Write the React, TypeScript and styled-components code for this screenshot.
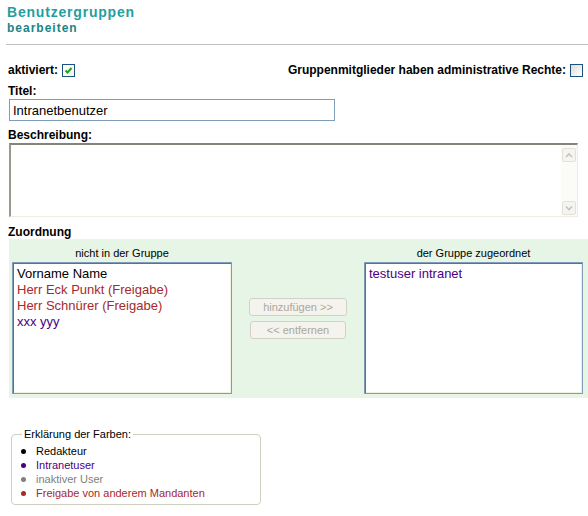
import React from 'react';
import styled, { createGlobalStyle } from 'styled-components';

const GlobalStyle = createGlobalStyle`
	html, body {
		margin: 0;
		padding: 0;
		background: #ffffff;
	}
	body {
		font-family: 'Liberation Sans', Arial, sans-serif;
		color: #000000;
		overflow: hidden;
	}
`;

const COLORS = {
	editor: '#000000',
	intranet: '#4b0082',
	inactive: '#808080',
	shared: '#a52a2a',
};

const Page = styled.div`
	width: 588px;
	padding-left: 8px;
	box-sizing: border-box;
`;

const Header = styled.div`
	padding-top: 4px;
	margin-left: -1px;
`;

const Title = styled.div`
	font: bold 14px/17px 'Liberation Sans', Arial, sans-serif;
	letter-spacing: 0.8px;
	color: #1f9f9f;
`;

const SubTitle = styled.div`
	font: bold 12px/15px 'Liberation Sans', Arial, sans-serif;
	letter-spacing: 1px;
	color: #1a8585;
`;

const Rule = styled.div`
	height: 1px;
	background: #c0c0c0;
	margin: 8px 0 0 -2px;
`;

const OptionRow = styled.div`
	display: flex;
	justify-content: space-between;
	align-items: center;
	height: 16px;
	margin-top: 17px;
	padding-right: 5px;
`;

const Option = styled.label`
	display: flex;
	align-items: center;
	gap: 4px;
	font: bold 12px/14px 'Liberation Sans', Arial, sans-serif;
`;

const Box = styled.span<{ $checked?: boolean }>`
	display: inline-flex;
	align-items: center;
	justify-content: center;
	width: 13px;
	height: 13px;
	box-sizing: border-box;
	border: 1px solid #1c5180;
	background: ${(p) =>
		p.$checked
			? 'linear-gradient(135deg, #ffffff 0%, #f4f4ef 100%)'
			: 'linear-gradient(135deg, #dcdcd7 0%, #ffffff 100%)'};
`;

const Label = styled.div<{ $top: number }>`
	font: bold 12px/14px 'Liberation Sans', Arial, sans-serif;
	margin-top: ${(p) => p.$top}px;
`;

const TextInput = styled.input`
	display: block;
	width: 326px;
	height: 22px;
	margin: 1px 0 0 1px;
	box-sizing: border-box;
	border: 1px solid #7f9db9;
	padding: 0 3px;
	font: 13px 'Liberation Sans', Arial, sans-serif;
	color: #000000;
	outline: none;
`;

const DescBox = styled.div`
	display: flex;
	width: 569px;
	height: 74px;
	margin: 1px 0 0 1px;
	box-sizing: border-box;
	border-top: 2px solid #85847a;
	border-left: 2px solid #9a998f;
	border-right: 1px solid #eeede5;
	border-bottom: 1px solid #eeede5;
	background: #ffffff;
`;

const DescText = styled.textarea`
	flex: 1;
	border: none;
	resize: none;
	outline: none;
	padding: 2px;
	font: 13px 'Liberation Sans', Arial, sans-serif;
`;

const ScrollBar = styled.div`
	width: 16px;
	display: flex;
	flex-direction: column;
	justify-content: space-between;
	align-items: center;
	padding: 3px 0 1px;
	background: #fbfbf7;
	box-sizing: border-box;
`;

const ScrollBtn = styled.div`
	width: 14px;
	height: 14px;
	box-sizing: border-box;
	border: 1px solid #e3e2da;
	border-radius: 2px;
	background: #f5f4ef;
	display: flex;
	align-items: center;
	justify-content: center;
`;

const Panel = styled.div`
	display: grid;
	grid-template-columns: 220px 132px 219px;
	margin-left: 1px;
	padding: 7px 5px 4px 3px;
	background: #e6f5e6;
`;

const Column = styled.div`
	display: flex;
	flex-direction: column;
`;

const Caption = styled.div`
	font: 11px/15px 'Liberation Sans', Arial, sans-serif;
	text-align: center;
	margin-bottom: 1px;
`;

const ListBox = styled.div`
	height: 132px;
	box-sizing: border-box;
	border: 1px solid #7f9db9;
	box-shadow: inset 1px 1px 0 #716f64, inset -1px -1px 0 #f1efe2;
	background: #ffffff;
	padding: 3px 4px;
`;

const ListItem = styled.div<{ $color: string }>`
	font: 13px/16px 'Liberation Sans', Arial, sans-serif;
	color: ${(p) => p.$color};
	white-space: nowrap;
`;

const Actions = styled.div`
	display: flex;
	flex-direction: column;
	align-items: center;
	gap: 5px;
	padding-top: 52px;
`;

const MoveButton = styled.button<{ $width: number }>`
	width: ${(p) => p.$width}px;
	height: 18px;
	padding: 0;
	border: 1px solid #d3d1c6;
	border-radius: 3px;
	background: #f4f3ee;
	color: #aca899;
	font: 11px/16px 'Liberation Sans', Arial, sans-serif;
`;

const Legend = styled.fieldset`
	width: 250px;
	box-sizing: border-box;
	margin: 30px 0 0 3px;
	padding: 4px 7px 4px 7px;
	border: 1px solid #d0d0bf;
	border-radius: 4px;
`;

const LegendTitle = styled.legend`
	font: 11px/12px 'Liberation Sans', Arial, sans-serif;
	margin-left: 3px;
	padding: 0 2px;
`;

const LegendRow = styled.div<{ $color: string }>`
	display: flex;
	align-items: center;
	gap: 10px;
	font: 11px/14px 'Liberation Sans', Arial, sans-serif;
	color: ${(p) => p.$color};
`;

const Dot = styled.span<{ $color: string }>`
	width: 5px;
	height: 5px;
	border-radius: 50%;
	margin-left: 2px;
	background: ${(p) => p.$color};
`;

function CheckBox({ checked }: { checked?: boolean }) {
	return (
		<Box $checked={checked}>
			{checked ? (
				<svg width="9" height="9" viewBox="0 0 9 9">
					<path d="M1.5 4.5 L3.5 6.5 L7.5 2" fill="none" stroke="#21a121" strokeWidth="2" />
				</svg>
			) : null}
		</Box>
	);
}

function Chevron({ up }: { up?: boolean }) {
	return (
		<svg width="8" height="6" viewBox="0 0 8 6">
			<path
				d={up ? 'M1 5 L4 2 L7 5' : 'M1 1.5 L4 4.5 L7 1.5'}
				fill="none"
				stroke="#c6c5bc"
				strokeWidth="1.6"
			/>
		</svg>
	);
}

const available = [
	{ name: 'Vorname Name', color: COLORS.editor },
	{ name: 'Herr Eck Punkt (Freigabe)', color: COLORS.shared },
	{ name: 'Herr Schnürer (Freigabe)', color: COLORS.shared },
	{ name: 'xxx yyy', color: COLORS.intranet },
];

const assigned = [{ name: 'testuser intranet', color: COLORS.intranet }];

const legend = [
	{ text: 'Redakteur', color: COLORS.editor },
	{ text: 'Intranetuser', color: COLORS.intranet },
	{ text: 'inaktiver User', color: COLORS.inactive },
	{ text: 'Freigabe von anderem Mandanten', color: COLORS.shared },
];

export default function App() {
	return (
		<Page>
			<GlobalStyle />
			<Header>
				<Title>Benutzergruppen</Title>
				<SubTitle>bearbeiten</SubTitle>
			</Header>
			<Rule />

			<OptionRow>
				<Option>
					aktiviert:
					<CheckBox checked />
				</Option>
				<Option>
					Gruppenmitglieder haben administrative Rechte:
					<CheckBox />
				</Option>
			</OptionRow>

			<Label $top={6}>Titel:</Label>
			<TextInput defaultValue="Intranetbenutzer" />

			<Label $top={7}>Beschreibung:</Label>
			<DescBox>
				<DescText />
				<ScrollBar>
					<ScrollBtn>
						<Chevron up />
					</ScrollBtn>
					<ScrollBtn>
						<Chevron />
					</ScrollBtn>
				</ScrollBar>
			</DescBox>

			<Label $top={8}>Zuordnung</Label>
			<Panel>
				<Column>
					<Caption>nicht in der Gruppe</Caption>
					<ListBox>
						{available.map((u) => (
							<ListItem key={u.name} $color={u.color}>
								{u.name}
							</ListItem>
						))}
					</ListBox>
				</Column>
				<Actions>
					<MoveButton $width={98} disabled>
						hinzufügen &gt;&gt;
					</MoveButton>
					<MoveButton $width={96} disabled>
						&lt;&lt; entfernen
					</MoveButton>
				</Actions>
				<Column>
					<Caption>der Gruppe zugeordnet</Caption>
					<ListBox>
						{assigned.map((u) => (
							<ListItem key={u.name} $color={u.color}>
								{u.name}
							</ListItem>
						))}
					</ListBox>
				</Column>
			</Panel>

			<Legend>
				<LegendTitle>Erklärung der Farben:</LegendTitle>
				{legend.map((l) => (
					<LegendRow key={l.text} $color={l.color}>
						<Dot $color={l.color} />
						{l.text}
					</LegendRow>
				))}
			</Legend>
		</Page>
	);
}
